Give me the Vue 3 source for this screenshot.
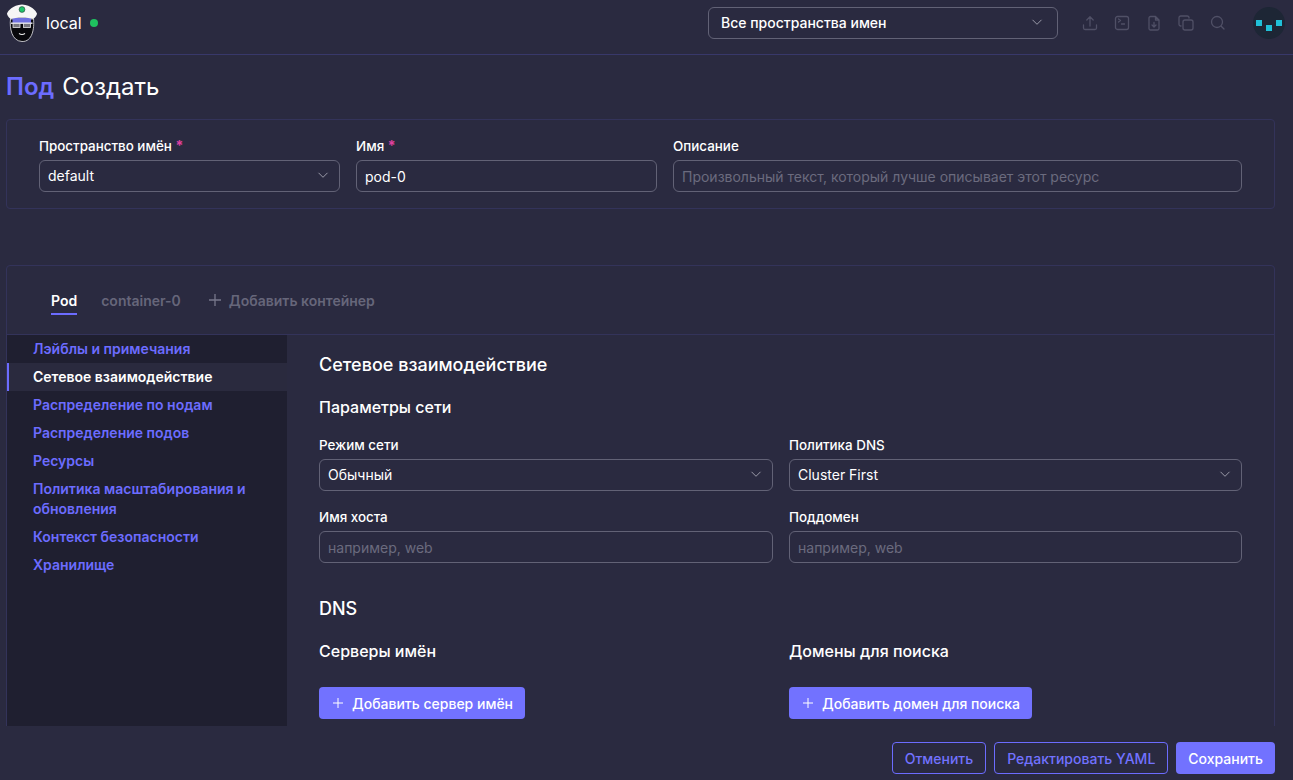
<template>
  <div class="page">
    <header class="topbar">
      <div class="brand">
        <svg class="logo" width="32" height="40" viewBox="6 3 32 40">
          <path d="M10.500 19c-1 9 1 22 11.500 22.500S34.500 28 33.500 19z" fill="#08080c" stroke="#e8e8ec" stroke-width="0.8" />
          <rect x="12.500" y="18" width="18.500" height="5" fill="#6f70e0" />
          <rect x="11" y="22.500" width="21.500" height="1.400" fill="#e6e6ea" />
          <rect x="13" y="23.500" width="7" height="4" fill="#77777f" stroke="#e6e6ea" stroke-width="0.8" />
          <rect x="23.500" y="23.500" width="7" height="4" fill="#77777f" stroke="#e6e6ea" stroke-width="0.8" />
          <path d="M19 33.500c2 1.300 4 1.300 6 0" stroke="#f2f2f2" stroke-width="1.100" fill="none" />
          <path d="M10.500 19c-.8-.8-3.500-3.500-3.500-5.500C8 11 12.500 5 22 4.500 31.500 5 36 11 37 13.500c0 2-2.700 4.700-3.500 5.500-6-1.600-17-1.600-23 0z" fill="#f6f6f6" />
          <circle cx="22" cy="9.500" r="2.900" fill="#1fc46a" stroke="#2b3a3a" stroke-width="0.6" />
        </svg>
        <span class="cluster">local</span>
        <span class="status"></span>
      </div>
      <div class="topbar-right">
        <div class="select ns-select">
          <span>Все пространства имен</span>
          <svg class="chev" width="12" height="12" viewBox="0 0 12 12"><path d="M1.500 3.800l4.500 4.500 4.500-4.500" /></svg>
        </div>
        <div class="tools">
          <svg width="16" height="16" viewBox="0 0 16 16"><path d="M1.500 10v3a1.500 1.500 0 0 0 1.500 1.500h10a1.500 1.500 0 0 0 1.500-1.500v-3M8 11V2M4.800 5L8 1.800 11.200 5" /></svg>
          <svg width="16" height="16" viewBox="0 0 16 16"><rect x="1.500" y="1.500" width="13" height="13" rx="2" /><path d="M4.500 4l2 1.500-2 1.500M7.500 9h3" /></svg>
          <svg width="16" height="16" viewBox="0 0 16 16"><path d="M3 3a1.500 1.500 0 0 1 1.500-1.500h5l3.500 3.500v8.500a1.500 1.500 0 0 1-1.500 1.500h-7A1.500 1.500 0 0 1 3 13.500zM9.500 1.500V5h3.500M8 7.500v4M6 10l2 2 2-2" /></svg>
          <svg width="16" height="16" viewBox="0 0 16 16"><rect x="5" y="5" width="10" height="10" rx="2" /><path d="M11 3V2.800A1.800 1.800 0 0 0 9.200 1H2.800A1.800 1.800 0 0 0 1 2.800v6.400A1.800 1.800 0 0 0 2.800 11H3" /></svg>
          <svg width="16" height="16" viewBox="0 0 16 16"><circle cx="7" cy="7" r="5.500" /><path d="M11.200 11.200L14 14" /></svg>
        </div>
        <div class="avatar">
          <i class="dot d1"></i><i class="dot d2"></i><i class="dot d3"></i>
        </div>
      </div>
    </header>

    <main class="content">
      <h1 class="title"><span class="kind">Под</span> Создать</h1>

      <section class="card meta">
        <div class="field">
          <label>Пространство имён <b>*</b></label>
          <div class="select">
            <span>default</span>
            <svg class="chev" width="12" height="12" viewBox="0 0 12 12"><path d="M1.500 3.800l4.500 4.500 4.500-4.500" /></svg>
          </div>
        </div>
        <div class="field">
          <label>Имя <b>*</b></label>
          <div class="input">pod-0</div>
        </div>
        <div class="field">
          <label>Описание</label>
          <div class="input placeholder">Произвольный текст, который лучше описывает этот ресурс</div>
        </div>
      </section>

      <section class="card editor">
        <nav class="tabs">
          <span class="tab active">Pod</span>
          <span class="tab">container-0</span>
          <span class="tab add">
            <svg width="14" height="14" viewBox="0 0 14 14"><path d="M7 1v12M1 7h12" /></svg>
            Добавить контейнер
          </span>
        </nav>
        <div class="editor-body">
          <aside class="side">
            <a
              v-for="item in sideItems"
              :key="item"
              :class="['side-item', { active: item === activeItem }]"
            >{{ item }}</a>
          </aside>
          <div class="form">
            <h2 class="h-main">Сетевое взаимодействие</h2>
            <h3 class="h-sub">Параметры сети</h3>
            <div class="two-col rows">
              <div class="field">
                <label>Режим сети</label>
                <div class="select">
                  <span>Обычный</span>
                  <svg class="chev" width="12" height="12" viewBox="0 0 12 12"><path d="M1.500 3.800l4.500 4.500 4.500-4.500" /></svg>
                </div>
              </div>
              <div class="field">
                <label>Политика DNS</label>
                <div class="select">
                  <span>Cluster First</span>
                  <svg class="chev" width="12" height="12" viewBox="0 0 12 12"><path d="M1.500 3.800l4.500 4.500 4.500-4.500" /></svg>
                </div>
              </div>
              <div class="field">
                <label>Имя хоста</label>
                <div class="input placeholder">например, web</div>
              </div>
              <div class="field">
                <label>Поддомен</label>
                <div class="input placeholder">например, web</div>
              </div>
            </div>
            <h2 class="h-dns">DNS</h2>
            <div class="two-col">
              <div>
                <h3 class="h-sub2">Серверы имён</h3>
                <button class="btn primary add-btn">
                  <svg width="10" height="10" viewBox="0 0 10 10"><path d="M5 0v10M0 5h10" /></svg>
                  Добавить сервер имён
                </button>
              </div>
              <div>
                <h3 class="h-sub2">Домены для поиска</h3>
                <button class="btn primary add-btn">
                  <svg width="10" height="10" viewBox="0 0 10 10"><path d="M5 0v10M0 5h10" /></svg>
                  Добавить домен для поиска
                </button>
              </div>
            </div>
          </div>
        </div>
      </section>
    </main>

    <footer class="footer">
      <button class="btn outline">Отменить</button>
      <button class="btn outline">Редактировать YAML</button>
      <button class="btn primary">Сохранить</button>
    </footer>
  </div>
</template>

<script setup>
const activeItem = 'Сетевое взаимодействие'

const sideItems = [
  'Лэйблы и примечания',
  'Сетевое взаимодействие',
  'Распределение по нодам',
  'Распределение подов',
  'Ресурсы',
  'Политика масштабирования и обновления',
  'Контекст безопасности',
  'Хранилище'
]
</script>

<style>
html, body {
  margin: 0;
  background: #2a2a40;
}
</style>

<style scoped>
.page {
  height: 780px;
  display: flex;
  flex-direction: column;
  overflow: hidden;
  background: #2a2a40;
  color: #fff;
  font-family: Inter, "Noto Sans", sans-serif;
  font-size: 14px;
}

.topbar {
  flex: none;
  height: 54px;
  display: flex;
  align-items: center;
  justify-content: space-between;
  border-bottom: 1px solid #38386a;
  padding: 0 8px 0 6px;
}

.brand {
  display: flex;
  align-items: center;
  margin-top: -8px;
}

.logo {
  margin-right: 8px;
}

.cluster {
  font-size: 16px;
}

.status {
  width: 8px;
  height: 8px;
  border-radius: 50%;
  background: #1fc15f;
  margin-left: 8px;
}

.topbar-right {
  display: flex;
  align-items: center;
  margin-top: -8px;
}

.ns-select {
  width: 350px;
  height: 32px;
  margin-right: 24px;
  font-weight: 500;
}

.ns-select span {
  padding-left: 4px;
}

.ns-select .chev {
  margin-right: 6px;
}

.tools {
  display: flex;
  gap: 16px;
  margin-right: 27px;
}

.tools svg {
  fill: none;
  stroke: #505066;
  stroke-width: 1.300;
  stroke-linecap: round;
  stroke-linejoin: round;
}

.avatar {
  position: relative;
  width: 32px;
  height: 32px;
  border-radius: 50%;
  background: #1d2635;
}

.dot {
  position: absolute;
  width: 6px;
  height: 6px;
  background: #20c0d8;
}
.d1 { left: 3px; top: 13px; }
.d2 { left: 13px; top: 18px; }
.d3 { left: 23px; top: 13px; }

.content {
  flex: 1;
  min-height: 0;
  overflow: hidden;
  padding: 0 18px 0 6px;
}

.title {
  margin: 0;
  height: 64px;
  box-sizing: border-box;
  padding-bottom: 2px;
  display: flex;
  align-items: center;
  gap: 8px;
  font-size: 24px;
  font-weight: 400;
}

.kind {
  color: #6c6cff;
  font-weight: 600;
}

.card {
  border: 1px solid #33335a;
  border-radius: 4px;
}

.meta {
  display: grid;
  grid-template-columns: 301px 301px 1fr;
  column-gap: 16px;
  padding: 16px 32px;
  height: 90px;
  box-sizing: border-box;
  margin-bottom: 56px;
}

.field label {
  display: block;
  height: 24px;
  line-height: 20px;
  font-weight: 500;
  font-size: 13.400px;
}

.field label b {
  color: #e040a0;
  font-weight: 700;
  font-size: 14px;
}

.select,
.input {
  height: 32px;
  box-sizing: border-box;
  border: 1px solid #626276;
  border-radius: 6px;
  padding: 0 8px;
  display: flex;
  align-items: center;
  justify-content: space-between;
  font-size: 14px;
}

.select {
  padding-bottom: 2px;
}

.placeholder {
  color: #6b6b7e;
}

.chev {
  fill: none;
  stroke: #9a9aa8;
  stroke-width: 1;
  margin-right: 2px;
}

.editor {
  height: 600px;
}

.tabs {
  height: 68px;
  display: flex;
  align-items: center;
  gap: 24px;
  padding: 0 44px;
  border-bottom: 1px solid #33335a;
  font-weight: 600;
  color: #66667a;
}

.tab {
  position: relative;
  display: flex;
  align-items: center;
  gap: 7px;
}

.tab.active {
  color: #fff;
}

.tab.active::after {
  content: "";
  position: absolute;
  left: 0;
  right: 0;
  bottom: -6px;
  height: 2px;
  background: #6c6cff;
}

.add {
  margin-left: 3px;
}

.add svg {
  fill: none;
  stroke: #77778a;
  stroke-width: 1.300;
}

.editor-body {
  display: flex;
  height: 531px;
}

.side {
  width: 280px;
  flex: none;
  background: #1f1f30;
  box-sizing: border-box;
}

.side-item {
  display: block;
  padding: 4px 26px;
  line-height: 20px;
  color: #6c6cff;
  font-weight: 600;
}

.side-item.active {
  color: #fff;
  background: #2a2a3e;
  box-shadow: inset 2px 0 0 #6c6cff;
}

.form {
  flex: 1;
  padding: 0 32px;
}

.h-main {
  margin: 18px 0 0;
  font-size: 18px;
  line-height: 24px;
  font-weight: 500;
}

.h-sub {
  margin: 18px 0 0;
  font-size: 16px;
  line-height: 24px;
  font-weight: 500;
}

.two-col {
  display: grid;
  grid-template-columns: 454px 453px;
  column-gap: 16px;
}

.rows {
  margin-top: 16px;
  row-gap: 16px;
}

.h-dns {
  margin: 34px 0 0;
  font-size: 18px;
  line-height: 24px;
  font-weight: 500;
}

.h-sub2 {
  margin: 18px 0 0;
  font-size: 16px;
  line-height: 24px;
  font-weight: 500;
}

.btn {
  height: 32px;
  box-sizing: border-box;
  border-radius: 4px;
  font-family: inherit;
  font-size: 14px;
  padding: 0 12px;
  display: inline-flex;
  align-items: center;
  cursor: pointer;
}

.primary {
  background: #7272ff;
  color: #fff;
  border: none;
  font-weight: 500;
}

.add-btn {
  margin-top: 24px;
  gap: 9px;
  padding: 0 12px 0 14px;
}

.add-btn svg {
  fill: none;
  stroke: #fff;
  stroke-width: 1;
}

.outline {
  background: transparent;
  border: 1px solid #6c6cff;
  color: #7272ff;
  font-weight: 500;
}

.footer {
  flex: none;
  height: 54px;
  box-sizing: border-box;
  display: flex;
  align-items: flex-start;
  justify-content: flex-end;
  gap: 8px;
  padding: 16px 18px 0 0;
}
</style>
